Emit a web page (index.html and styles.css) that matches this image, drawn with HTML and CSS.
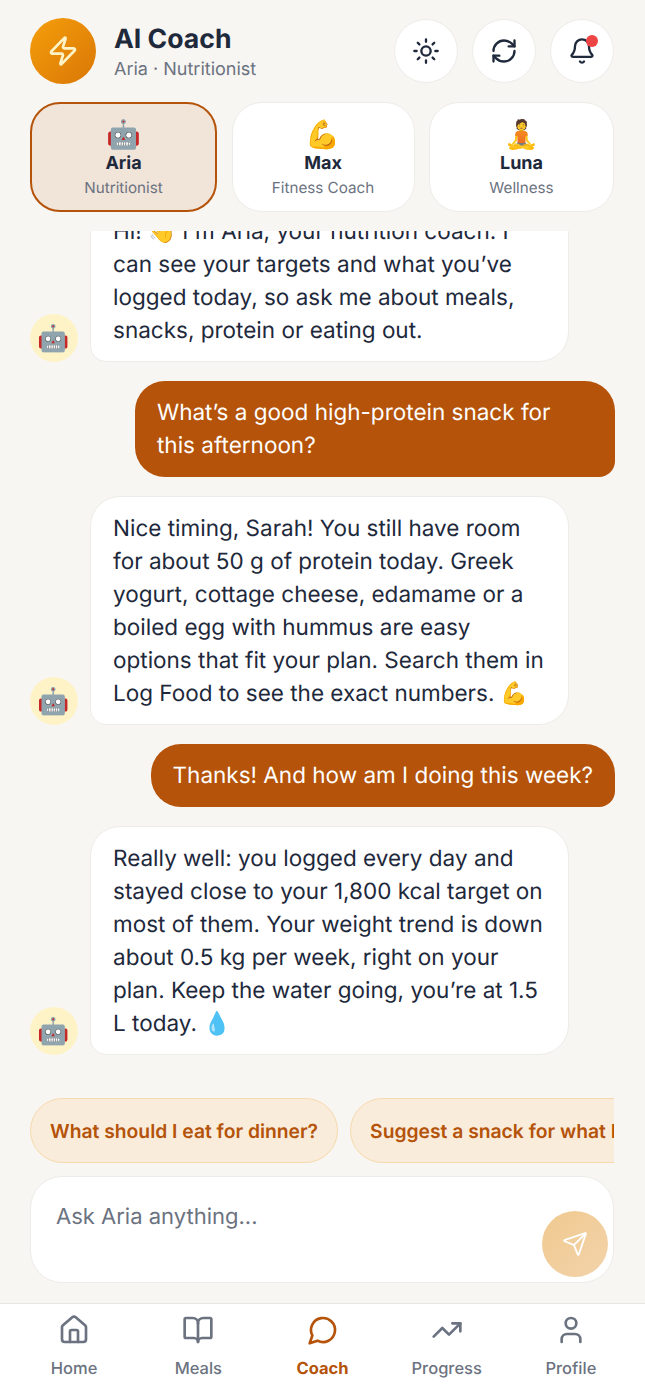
FILE: index.html
```html
<!DOCTYPE html>
<html>

<head>
    <title>AI Coach</title>
    <link rel="stylesheet" href="styles.css">
</head>

<body>
    <header class="topBar">
        <div class="logo">
            <svg class="icon" width="32" height="32" viewBox="0 0 24 24"><path d="M4 14a1 1 0 0 1-.78-1.63l9.9-10.2a.5.5 0 0 1 .86.46l-1.92 6.02A1 1 0 0 0 13 10h7a1 1 0 0 1 .78 1.63l-9.9 10.2a.5.5 0 0 1-.86-.46l1.92-6.02A1 1 0 0 0 11 14z"/></svg>
        </div>
        <div class="titleBlock">
            <h1>AI Coach</h1>
            <p>Aria · Nutritionist</p>
        </div>
        <button class="roundBtn">
            <svg class="icon" width="28" height="28" viewBox="0 0 24 24"><circle cx="12" cy="12" r="4"/><path d="M12 2v2M12 20v2M4.93 4.93l1.41 1.41M17.66 17.66l1.41 1.41M2 12h2M20 12h2M6.34 17.66l-1.41 1.41M19.07 4.93l-1.41 1.41"/></svg>
        </button>
        <button class="roundBtn">
            <svg class="icon" width="28" height="28" viewBox="0 0 24 24"><path d="M3 12a9 9 0 0 1 9-9 9.75 9.75 0 0 1 6.74 2.74L21 8"/><path d="M21 3v5h-5"/><path d="M21 12a9 9 0 0 1-9 9 9.75 9.75 0 0 1-6.74-2.74L3 16"/><path d="M8 16H3v5"/></svg>
        </button>
        <button class="roundBtn">
            <svg class="icon" width="28" height="28" viewBox="0 0 24 24"><path d="M10.268 21a2 2 0 0 0 3.464 0"/><path d="M3.262 15.326A1 1 0 0 0 4 17h16a1 1 0 0 0 .74-1.673C19.41 13.956 18 12.499 18 8A6 6 0 0 0 6 8c0 4.499-1.411 5.956-2.738 7.326"/></svg>
            <span class="dot"></span>
        </button>
    </header>

    <div class="coachTabs">
        <div class="coachTab active">
            <span class="tabEmoji">🤖</span>
            <strong>Aria</strong>
            <small>Nutritionist</small>
        </div>
        <div class="coachTab">
            <span class="tabEmoji">💪</span>
            <strong>Max</strong>
            <small>Fitness Coach</small>
        </div>
        <div class="coachTab">
            <span class="tabEmoji">🧘</span>
            <strong>Luna</strong>
            <small>Wellness</small>
        </div>
    </div>

    <main class="chat">
        <div class="msgRow">
            <div class="avatar">🤖</div>
            <div class="bubble">Hi! 👋 I'm Aria, your nutrition coach. I can see your targets and what you’ve logged today, so ask me about meals, snacks, protein or eating out.</div>
        </div>
        <div class="msgRow mine">
            <div class="bubble">What’s a good high-protein snack for this afternoon?</div>
        </div>
        <div class="msgRow">
            <div class="avatar">🤖</div>
            <div class="bubble">Nice timing, Sarah! You still have room for about 50 g of protein today. Greek yogurt, cottage cheese, edamame or a boiled egg with hummus are easy options that fit your plan. Search them in Log Food to see the exact numbers. 💪</div>
        </div>
        <div class="msgRow mine">
            <div class="bubble">Thanks! And how am I doing this week?</div>
        </div>
        <div class="msgRow">
            <div class="avatar">🤖</div>
            <div class="bubble">Really well: you logged every day and stayed close to your 1,800 kcal target on most of them. Your weight trend is down about 0.5 kg per week, right on your plan. Keep the water going, you’re at 1.5 L today. 💧</div>
        </div>
    </main>

    <div class="chips">
        <div class="chip">What should I eat for dinner?</div>
        <div class="chip">Suggest a snack for what I have left</div>
    </div>

    <div class="composer">
        <span class="placeholder">Ask Aria anything...</span>
        <button class="sendBtn">
            <svg class="icon" width="26" height="26" viewBox="0 0 24 24"><path d="M14.536 21.686a.5.5 0 0 0 .937-.024l6.5-19a.496.496 0 0 0-.635-.635l-19 6.5a.5.5 0 0 0-.024.937l7.93 3.18a2 2 0 0 1 1.112 1.11z"/><path d="M21.854 2.147l-10.94 10.939"/></svg>
        </button>
    </div>

    <nav class="bottomNav">
        <div class="navItem">
            <svg class="icon" width="32" height="32" viewBox="0 0 24 24"><path d="M15 21v-8a1 1 0 0 0-1-1h-4a1 1 0 0 0-1 1v8"/><path d="M3 10a2 2 0 0 1 .709-1.528l7-5.999a2 2 0 0 1 2.582 0l7 5.999A2 2 0 0 1 21 10v9a2 2 0 0 1-2 2H5a2 2 0 0 1-2-2z"/></svg>
            <span>Home</span>
        </div>
        <div class="navItem">
            <svg class="icon" width="32" height="32" viewBox="0 0 24 24"><path d="M12 7v14"/><path d="M3 18a1 1 0 0 1-1-1V4a1 1 0 0 1 1-1h5a4 4 0 0 1 4 4 4 4 0 0 1 4-4h5a1 1 0 0 1 1 1v13a1 1 0 0 1-1 1h-6a3 3 0 0 0-3 3 3 3 0 0 0-3-3z"/></svg>
            <span>Meals</span>
        </div>
        <div class="navItem current">
            <svg class="icon" width="32" height="32" viewBox="0 0 24 24"><path d="M7.9 20A9 9 0 1 0 4 16.1L2 22Z"/></svg>
            <span>Coach</span>
        </div>
        <div class="navItem">
            <svg class="icon" width="32" height="32" viewBox="0 0 24 24"><path d="M22 7l-8.5 8.5-5-5L2 17"/><path d="M16 7h6v6"/></svg>
            <span>Progress</span>
        </div>
        <div class="navItem">
            <svg class="icon" width="32" height="32" viewBox="0 0 24 24"><path d="M19 21v-2a4 4 0 0 0-4-4H9a4 4 0 0 0-4 4v2"/><circle cx="12" cy="7" r="4"/></svg>
            <span>Profile</span>
        </div>
    </nav>
</body>

</html>
```

FILE: styles.css
```css
* {
    box-sizing: border-box;
}

body {
    margin: 0;
    height: 1398px;
    display: flex;
    flex-direction: column;
    overflow: hidden;
    font-family: Inter, "Noto Sans", sans-serif;
    text-rendering: geometricPrecision;
    background-color: #f8f6f3;
    color: #1e293b;
}

.icon {
    fill: none;
    stroke: currentColor;
    stroke-width: 2;
    stroke-linecap: round;
    stroke-linejoin: round;
    display: block;
}

/* Header */
.topBar {
    display: flex;
    align-items: center;
    padding: 18px 31px 18px 30px;
    gap: 14px;
}

.logo {
    width: 66px;
    height: 66px;
    border-radius: 50%;
    display: flex;
    align-items: center;
    justify-content: center;
    color: #fef3c7;
    background: linear-gradient(135deg, #f59e0b, #d97706);
    margin-right: 4px;
}

.titleBlock {
    flex-grow: 1;
}

.titleBlock h1 {
    margin: 0;
    font-size: 26.6px;
    line-height: 36px;
    font-weight: 700;
}

.titleBlock p {
    margin: 0;
    font-size: 18px;
    line-height: 25px;
    color: #6b7280;
}

.roundBtn {
    position: relative;
    width: 64px;
    height: 64px;
    border: 1px solid #eeece9;
    border-radius: 50%;
    background-color: #fff;
    color: #1e293b;
    display: flex;
    align-items: center;
    justify-content: center;
    padding: 0;
}

.dot {
    position: absolute;
    top: 15px;
    right: 15px;
    width: 12px;
    height: 12px;
    border-radius: 50%;
    background-color: #ef4444;
}

/* Coach picker */
.coachTabs {
    display: flex;
    justify-content: space-between;
    padding: 0 31px 0 30px;
}

.coachTab {
    width: 185px;
    height: 110px;
    border: 1px solid #eeece9;
    border-radius: 30px;
    background-color: #fff;
    display: flex;
    flex-direction: column;
    align-items: center;
    padding-top: 14px;
}

.coachTab:nth-child(2) {
    width: 183px;
}

.coachTab.active {
    width: 187px;
    border: 2px solid #b45309;
    background-color: #f1e4d9;
    padding-top: 13px;
}

.tabEmoji {
    font-size: 28px;
    line-height: 34px;
}

.coachTab strong {
    font-size: 18px;
    line-height: 24px;
    font-weight: 700;
    margin-top: 1px;
}

.coachTab small {
    font-size: 15.2px;
    line-height: 24px;
    color: #6b7280;
}

/* Messages */
.chat {
    flex: 1 1 0;
    min-height: 0;
    margin-top: 19px;
    padding: 0 30px 43px;
    overflow: hidden;
    display: flex;
    flex-direction: column;
    justify-content: flex-end;
    gap: 19px;
}

.msgRow {
    display: flex;
    align-items: flex-end;
    gap: 12px;
    flex-shrink: 0;
}

.msgRow.mine {
    justify-content: flex-end;
}

.avatar {
    width: 48px;
    height: 48px;
    border-radius: 50%;
    background-color: #fef3c7;
    display: flex;
    align-items: center;
    justify-content: center;
    font-size: 26px;
    flex-shrink: 0;
}

.bubble {
    width: 479px;
    padding: 15px 22px 14px;
    font-size: 22.5px;
    line-height: 33px;
    background-color: #fff;
    border: 1px solid #eeece9;
    border-radius: 30px 30px 30px 16px;
}

.mine .bubble {
    width: auto;
    max-width: 480px;
    padding: 15px 22px;
    background-color: #b45309;
    border: none;
    color: #fff;
    border-radius: 30px 30px 16px 30px;
}

/* Suggestions */
.chips {
    display: flex;
    gap: 12px;
    margin: 0 31px 0 30px;
    overflow: hidden;
    flex-shrink: 0;
}

.chip {
    flex-shrink: 0;
    height: 65px;
    padding: 1px 19px 0;
    display: flex;
    align-items: center;
    border: 1px solid #f6d9ac;
    border-radius: 33px;
    background-color: #faecdb;
    color: #b45309;
    font-size: 19.3px;
    font-weight: 600;
    white-space: nowrap;
}

/* Input */
.composer {
    position: relative;
    margin: 13px 31px 20px 30px;
    height: 107px;
    border: 1px solid #eeece9;
    border-radius: 32px;
    background-color: #fff;
    padding: 22px 25px;
    flex-shrink: 0;
}

.placeholder {
    font-size: 22px;
    line-height: 36px;
    color: #6b7280;
}

.sendBtn {
    position: absolute;
    right: 5px;
    bottom: 5px;
    width: 66px;
    height: 66px;
    border: none;
    border-radius: 50%;
    padding: 0;
    color: #fff;
    background: linear-gradient(135deg, #f0c98f, #f3d3ab);
    display: flex;
    align-items: center;
    justify-content: center;
}

.sendBtn .icon {
    stroke-width: 1.7;
}

/* Bottom nav */
.bottomNav {
    display: flex;
    height: 95px;
    padding: 10px 12px 0;
    background-color: #fff;
    border-top: 1px solid #e8e6e3;
    flex-shrink: 0;
}

.navItem {
    flex: 1;
    display: flex;
    flex-direction: column;
    align-items: center;
    gap: 10px;
    color: #6b7280;
    font-size: 16.5px;
    line-height: 24px;
    font-weight: 500;
}

.navItem.current {
    color: #b45309;
    font-weight: 700;
}
```
